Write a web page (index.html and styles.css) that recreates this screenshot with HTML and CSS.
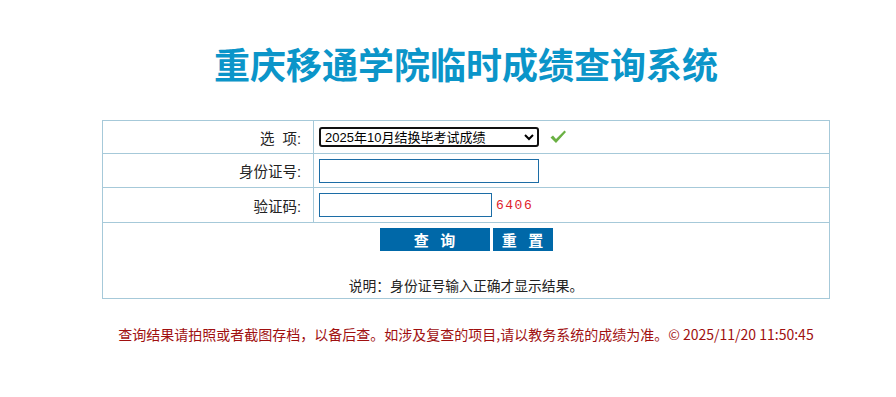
FILE: index.html
```html
<!DOCTYPE html>
<html lang="zh-CN">
<head>
    <meta charset="UTF-8">
    <meta name="viewport" content="width=device-width, initial-scale=1.0">
    <title>重庆移通学院临时成绩查询系统</title>
    <link rel="stylesheet" href="styles.css">
</head>
<body>
    <div class="wrap">
        <h1 class="title">重庆移通学院临时成绩查询系统</h1>
        <form id="queryForm">
            <table class="query-table">
                <tr class="row-1">
                    <td class="label">选&nbsp;&nbsp;项:</td>
                    <td class="field">
                        <select class="sel">
                            <option>2025年10月结换毕考试成绩</option>
                        </select>
                        <svg class="ok" width="18" height="16" viewBox="0 0 18 16">
                            <path d="M1.5 8.5 L4 6.5 L7 10 L15.5 1.5 L17 3 L7 14 Z" fill="#6ab043"/>
                        </svg>
                    </td>
                </tr>
                <tr class="row-2">
                    <td class="label">身份证号:</td>
                    <td class="field"><input type="text" class="txt txt-long"></td>
                </tr>
                <tr class="row-3">
                    <td class="label">验证码:</td>
                    <td class="field"><input type="text" class="txt txt-short"><span class="code">6406</span></td>
                </tr>
                <tr class="row-4">
                    <td colspan="2" class="actions">
                        <div class="btns">
                            <button type="submit" class="btn btn-query">查 询</button>
                            <button type="reset" class="btn btn-reset">重 置</button>
                        </div>
                        <p class="note">说明：身份证号输入正确才显示结果。</p>
                    </td>
                </tr>
            </table>
        </form>
        <p class="footer">查询结果请拍照或者截图存档，以备后查。如涉及复查的项目,请以教务系统的成绩为准。© 2025/11/20 11:50:45</p>
    </div>
</body>
</html>
```

FILE: styles.css
```css
body {
    margin: 0;
    font-family: "Liberation Sans", "Noto Sans CJK SC", sans-serif;
    font-size: 13px;
    color: #222;
    background: #fff;
}

.wrap {
    width: 728px;
    margin-left: 102px;
    padding-top: 40px;
}

.title {
    margin: 0 0 34px;
    height: 46px;
    line-height: 46px;
    text-align: center;
    font-size: 36px;
    font-weight: bold;
    font-family: "Noto Sans CJK SC", sans-serif;
    color: #0b95c9;
}

.query-table {
    width: 728px;
    border-collapse: collapse;
    border: 1px solid #a6c9d9;
}

.query-table td {
    border: 1px solid #a6c9d9;
    padding: 0;
}

.label {
    width: 198px;
    padding-right: 12px !important;
    text-align: right;
    font-size: 14.5px;
}

.field {
    padding-left: 5px !important;
}

.row-1 td { height: 32px; }
.row-2 td { height: 33px; }
.row-3 td { height: 34px; }

.sel {
    width: 220px;
    height: 20px;
    font-size: 13px;
    font-family: "Liberation Sans", "Noto Sans CJK SC", sans-serif;
    border: 2px solid #111;
    border-radius: 3px;
    background: #fff;
    vertical-align: middle;
}

.ok {
    margin-left: 6px;
    vertical-align: middle;
}

.txt {
    height: 24px;
    box-sizing: border-box;
    border: 1px solid #1c6da6;
    vertical-align: middle;
    padding: 0 3px;
}

.txt-long { width: 220px; }
.txt-short { width: 173px; }

.code {
    margin-left: 4px;
    font-family: "Liberation Mono", monospace;
    font-size: 13px;
    letter-spacing: 1.5px;
    color: #e0202a;
    vertical-align: middle;
}

.actions {
    text-align: center;
    height: 75px;
    vertical-align: top;
}

.btns {
    margin-top: 5px;
    display: flex;
    justify-content: center;
    gap: 3px;
}

.btn {
    height: 23px;
    border: none;
    background: #0068a8;
    color: #fff;
    font-weight: bold;
    font-size: 15px;
    letter-spacing: 4px;
    text-indent: 4px;
    font-family: "Noto Sans CJK SC", sans-serif;
    cursor: pointer;
    padding: 0;
}

.btn-query { width: 110px; }
.btn-reset { width: 60px; }

.note {
    margin: 24px 0 0;
    font-size: 13.8px;
}

.footer {
    margin: 25px 0 0;
    text-align: center;
    color: #a01010;
    font-size: 14px;
    font-family: "Noto Sans CJK SC", sans-serif;
}
```
